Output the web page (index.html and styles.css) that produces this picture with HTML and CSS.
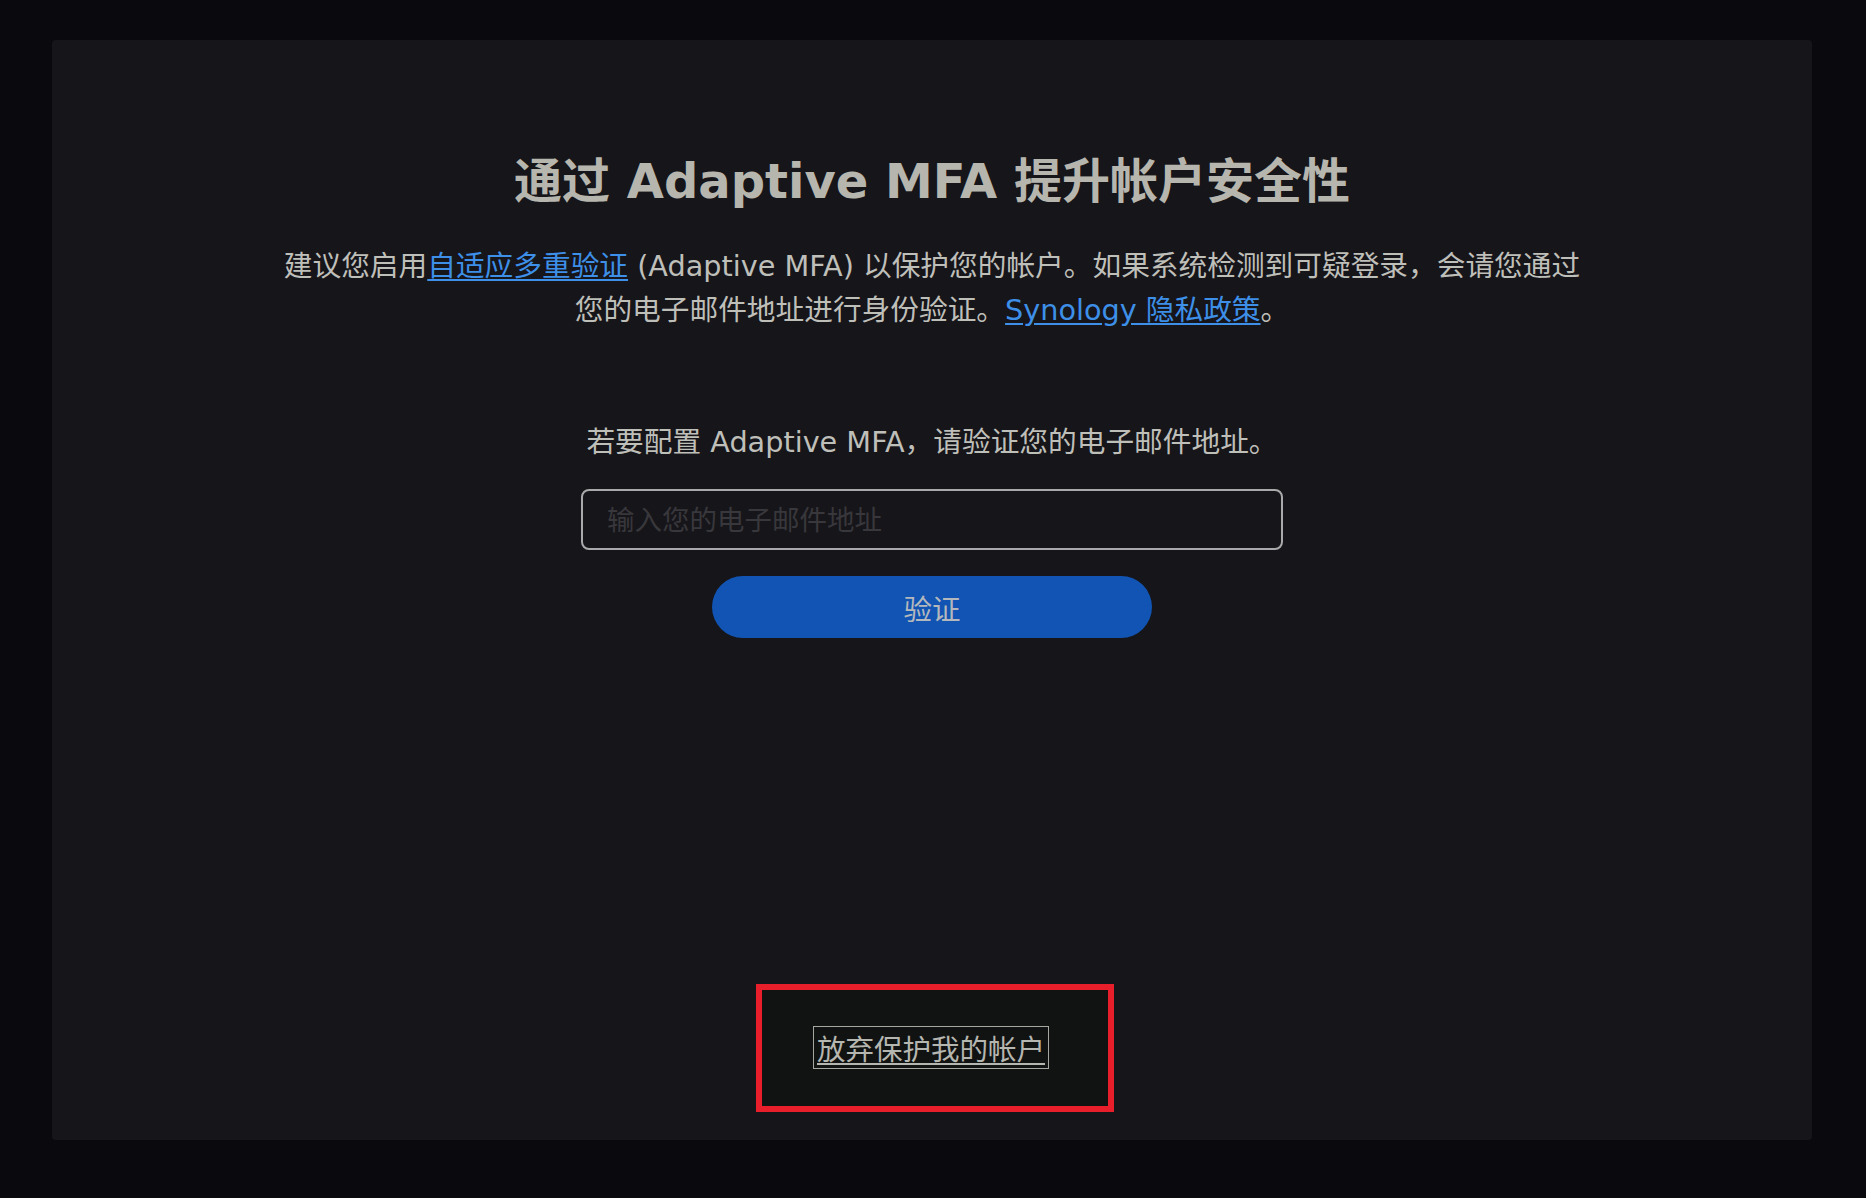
FILE: index.html
```html
<!DOCTYPE html>
<html lang="zh-CN">
<head>
<meta charset="utf-8">
<title>Adaptive MFA</title>
<link rel="stylesheet" href="styles.css">
</head>
<body>
<div class="page">
  <main class="panel">
    <h1 class="title">通过 Adaptive MFA 提升帐户安全性</h1>
    <p class="intro">建议您启用<a href="#" class="link">自适应多重验证</a> (Adaptive MFA) 以保护您的帐户。如果系统检测到可疑登录，会请您通过您的电子邮件地址进行身份验证。<a href="#" class="link">Synology 隐私政策</a>。</p>
    <p class="prompt">若要配置 Adaptive MFA，请验证您的电子邮件地址。</p>
    <input class="email" type="text" placeholder="输入您的电子邮件地址">
    <button class="verify" type="button">验证</button>
    <div class="highlight">
      <a href="#" class="skip">放弃保护我的帐户</a>
    </div>
  </main>
</div>
</body>
</html>
```

FILE: styles.css
```css
html, body {
  margin: 0;
  padding: 0;
  background: #0a090d;
}

body {
  font-family: "DejaVu Sans", "Noto Sans CJK SC", sans-serif;
  color: #bdbdb7;
}

.page {
  padding: 40px 54px 58px 52px;
  height: 1198px;
  box-sizing: border-box;
}

.panel {
  height: 1100px;
  box-sizing: border-box;
  background: #161519;
  border-radius: 4px;
  display: flex;
  flex-direction: column;
  align-items: center;
  padding: 112px 0 28px;
}

.title {
  margin: 0;
  font-size: 48px;
  line-height: 58px;
  font-weight: bold;
  color: #b6b6ae;
  white-space: nowrap;
}

.intro {
  margin: 34px 0 0;
  max-width: 1310px;
  font-size: 28.7px;
  line-height: 44px;
  text-align: center;
  color: #bfbfba;
}

.link {
  color: #3d8fe8;
  text-decoration: underline;
  text-underline-offset: 3px;
}

.prompt {
  margin: 88px 0 0;
  font-size: 28.7px;
  line-height: 44px;
  color: #bfbfba;
}

.email {
  margin-top: 25px;
  width: 702px;
  height: 61px;
  box-sizing: border-box;
  background: transparent;
  border: 2px solid #a9a9ab;
  border-radius: 8px;
  padding: 0 24px;
  font-family: "DejaVu Sans", "Noto Sans CJK SC", sans-serif;
  font-size: 27.5px;
  color: #cfcfcf;
  outline: none;
}

.email::placeholder {
  color: #38373c;
}

.verify {
  margin-top: 26px;
  width: 440px;
  height: 62px;
  border: none;
  border-radius: 31px;
  background: #1154b3;
  color: #b4b8bd;
  font-family: "DejaVu Sans", "Noto Sans CJK SC", sans-serif;
  font-size: 28.5px;
  cursor: pointer;
}

.highlight {
  margin-top: auto;
  margin-left: 6px;
  width: 358px;
  height: 128px;
  box-sizing: border-box;
  border: 6px solid #e81e2a;
  background: #111312;
  display: flex;
  align-items: center;
  justify-content: center;
  padding: 0 8px 1px 0;
}

.skip {
  display: inline-block;
  padding: 6px 3px 0;
  border: 1.5px solid #a7a7a2;
  font-size: 28.5px;
  line-height: 35px;
  color: #b6b6b0;
  text-decoration: underline;
  text-underline-offset: 3px;
}
```
